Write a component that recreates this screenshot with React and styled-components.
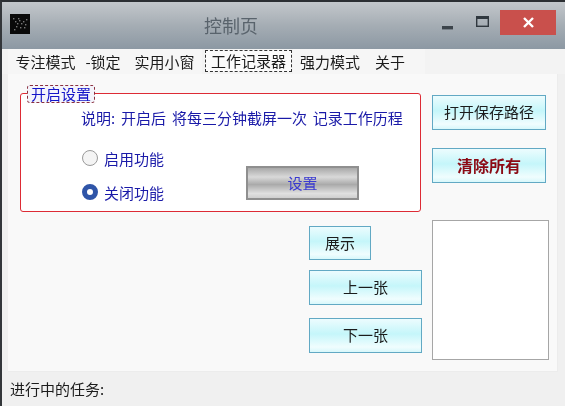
import React from "react";
import styled, { createGlobalStyle } from "styled-components";

const Global = createGlobalStyle`
  html, body { margin: 0; padding: 0; background: #f0f0f0; }
  body { font-family: "Noto Sans CJK SC", "Noto Sans", sans-serif; overflow: hidden; }
  * { box-sizing: border-box; }
`;

const Win = styled.div`
  width: 565px; height: 406px;
  display: flex; flex-direction: column;
  background: #f0f0f0;
  border-top: 2px solid #2c2f33;
  border-left: 2px solid #33363a;
  filter: blur(0.35px);
`;
const TitleBar = styled.div`
  height: 47px; flex: none;
  display: flex; align-items: flex-start;
  padding: 12px 9px 0 8px;
  background: linear-gradient(#c3c7cb, #a5adb4 50%, #8c98a3);
`;
const AppIcon = styled.svg`width: 20px; height: 20px; flex: none; display: block;`;
const Title = styled.div`
  margin-left: 174px; width: 56px; margin-top: -1px;
  font-size: 18px; line-height: 24px; color: #59636c; white-space: nowrap;
`;
const Controls = styled.div`
  margin-left: auto; display: flex; align-items: flex-start;
`;
const MinIcon = styled.svg`display: block; flex: none; margin: 6px 23px 0 0;`;
const MaxIcon = styled.svg`display: block; flex: none; margin: 2px 11px 0 0;`;
const Close = styled.div`
  width: 56px; height: 25px; margin-top: -4px;
  background: #c9504c; display: flex; align-items: center; justify-content: center;
`;
const TabStrip = styled.div`
  height: 25px; flex: none; display: flex; align-items: stretch;
  padding-left: 6px; background: #f3f3f3;
`;
const Tab = styled.div`
  width: ${p => p.$w}px; font-size: 15px; line-height: 25px;
  padding-left: ${p => p.$pl || 0}px;
  text-align: center; color: #1c1c1c; white-space: nowrap;
  background: #f6f6f6;
`;
const ActiveTab = styled.div`
  width: 87px; height: 22px; margin: 1px 1px 0 3px; flex: none;
  font-size: 15px; line-height: 20px; text-align: center; color: #1c1c1c;
  white-space: nowrap; border: 1px dashed #333; background: #fbfbfb;
`;
const Panel = styled.div`
  width: 550px; height: 298px; flex: none;
  margin-left: 6px;
  display: flex; align-items: flex-start;
  padding: 19px 0 0 12px;
  background: #f9f9f9;
  border-bottom: 1px solid #ececec;
  border-right: 1px solid #ececec;
`;
const LeftCol = styled.div`
  width: 402px; flex: none; display: flex; flex-direction: column; align-items: flex-end;
`;
const RightCol = styled.div`
  margin-left: 10px; width: 118px; flex: none; display: flex; flex-direction: column; align-items: flex-start;
`;
const Group = styled.div`
  position: relative; width: 401px; height: 119px; align-self: flex-start;
  border: 1.5px solid #dd2b35; border-radius: 3px; background: #fff;
  padding: 14px 0 0 60px;
`;
const Legend = styled.div`
  position: absolute; left: 6px; top: -9px; width: 68px; height: 18px;
  font-size: 15px; line-height: 16px; color: #1414c8; text-align: center;
  white-space: nowrap; background: #f4f4fb;
  border: 1px dashed #8a3040; border-radius: 3px;
`;
const Desc = styled.div`
  font-size: 15px; line-height: 20px; color: #1a1aa8; white-space: pre; word-spacing: 2.5px;
`;
const Options = styled.div`
  display: flex; align-items: flex-start; margin: 19px 0 0 1px;
`;
const Radios = styled.div`
  width: 164px; flex: none; display: flex; flex-direction: column; gap: 12px;
`;
const Radio = styled.div`
  display: flex; align-items: center; gap: 6px; height: 22px;
  font-size: 15px; color: #1a1aa8; white-space: nowrap;
`;
const Dot = styled.span`
  width: 16px; height: 16px; border-radius: 50%; flex: none;
  background: ${p => (p.$on ? "#fff" : "#f4f4f4")};
  border: ${p => (p.$on ? "5px solid #2f55a8" : "1.5px solid #9a9a9a")};
`;
const GrayBtn = styled.div`
  width: 113px; height: 34px; margin-top: 19px;
  border: 2px solid #8f8f8f;
  background: linear-gradient(#a8a8a8, #d9d9d9 30%, #aaaaaa 55%, #e0e0e0 85%, #cfcfcf);
  color: #3a3ad0; font-size: 15px; line-height: 30px; text-align: center;
`;
const CyanBtn = styled.div`
  width: ${p => p.$w}px; height: ${p => p.$h}px;
  margin-top: ${p => p.$mt}px; margin-right: ${p => p.$mr || 0}px; flex: none;
  border: 1.5px solid #62a9c4;
  background: linear-gradient(#ecfcfe, #c5f6fa 45%, #f0fdfe 85%, #d8f8fb);
  color: ${p => (p.$danger ? "#8c0a14" : "#1c1c1c")};
  font-weight: ${p => (p.$danger ? 700 : 400)};
  font-size: ${p => (p.$danger ? 16 : 15)}px;
  line-height: ${p => p.$h - 3}px; text-align: center; white-space: nowrap;
`;
const Preview = styled.div`
  width: 117px; height: 140px; margin-top: 37px;
  background: #fff; border: 1.5px solid #a6a6a6;
`;
const Status = styled.div`
  flex: 1; padding: 2px 0 0 8px;
  font-size: 15px; line-height: 30px; color: #1c1c1c;
`;

const dots = [[3,4],[5,7],[7,9],[9,6],[11,9],[13,7],[15,10],[6,12],[10,13],[14,13],[4,15],[16,5],[8,4]];

export default function App() {
  return (
    <Win>
      <Global />
      <TitleBar>
        <AppIcon viewBox="0 0 20 20">
          <rect width="20" height="20" fill="#0a0a0a" />
          {dots.map(([x, y]) => <rect key={`${x}-${y}`} x={x} y={y} width="1.4" height="1.4" fill="#777" />)}
        </AppIcon>
        <Title>控制页</Title>
        <Controls>
          <MinIcon width="11" height="16" viewBox="0 0 11 16"><rect x="0" y="6" width="11" height="3.4" fill="#3c444b" /></MinIcon>
          <MaxIcon width="13" height="12" viewBox="0 0 13 12">
            <rect x="0.7" y="0.7" width="11.6" height="9.6" fill="none" stroke="#30383f" strokeWidth="1.4" />
            <rect x="0" y="0" width="13" height="3" fill="#30383f" />
          </MaxIcon>
          <Close>
            <svg width="11" height="11" viewBox="0 0 11 11"><path d="M1 1l9 9M10 1l-9 9" stroke="#fff" strokeWidth="2.4" /></svg>
          </Close>
        </Controls>
      </TitleBar>
      <TabStrip>
        <Tab $w={69} $pl={6}>专注模式</Tab>
        <Tab $w={50} $pl={2}>-锁定</Tab>
        <Tab $w={75}>实用小窗</Tab>
        <ActiveTab>工作记录器</ActiveTab>
        <Tab $w={74}>强力模式</Tab>
        <Tab $w={46}>关于</Tab>
        <Tab $w={12} />
      </TabStrip>
      <Panel>
        <LeftCol>
          <Group>
            <Legend>开启设置</Legend>
            <Desc>说明: 开启后 将每三分钟截屏一次 记录工作历程</Desc>
            <Options>
              <Radios>
                <Radio><Dot />启用功能</Radio>
                <Radio><Dot $on />关闭功能</Radio>
              </Radios>
              <GrayBtn>设置</GrayBtn>
            </Options>
          </Group>
          <CyanBtn $w={62} $h={34} $mt={14} $mr={51}>展示</CyanBtn>
          <CyanBtn $w={113} $h={35} $mt={10}>上一张</CyanBtn>
          <CyanBtn $w={113} $h={35} $mt={13}>下一张</CyanBtn>
        </LeftCol>
        <RightCol>
          <CyanBtn $w={114} $h={35} $mt={2}>打开保存路径</CyanBtn>
          <CyanBtn $w={114} $h={35} $mt={18} $danger>清除所有</CyanBtn>
          <Preview />
        </RightCol>
      </Panel>
      <Status>进行中的任务:</Status>
    </Win>
  );
}
